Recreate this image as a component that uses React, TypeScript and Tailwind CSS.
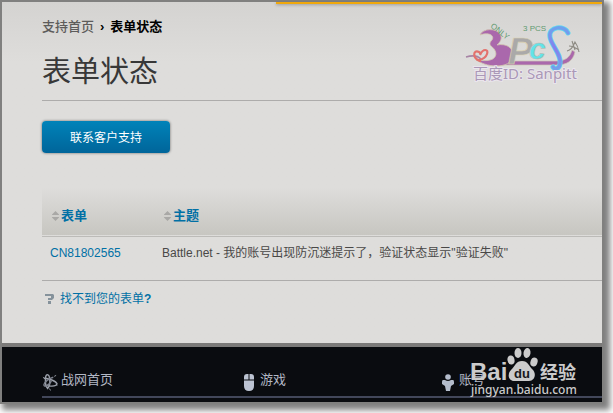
import type { ReactNode } from 'react';

const tickets = [
  {
    id: 'CN81802565',
    subject: 'Battle.net - 我的账号出现防沉迷提示了，验证状态显示"验证失败"',
  },
];

function SortArrows() {
  return (
    <svg aria-hidden width="7" height="10" viewBox="0 0 7 10" fill="#a9a8a6">
      <path d="M3.5 0 7 3.5V4H0v-.5zM0 6h7v.5L3.500 10 0 6.500z" />
    </svg>
  );
}

function SortHeader({ children }: { children: ReactNode }) {
  return (
    <button type="button" className="flex items-center gap-[2px] font-bold text-[#0070a5]">
      <SortArrows />
      {children}
    </button>
  );
}

function BattleNetIcon() {
  return (
    <svg aria-hidden width="17" height="18" viewBox="0 0 17 18" fill="none" stroke="#9ba0aa" strokeWidth="1.500">
      <path d="M4 3C5 0 8 1 8 5c1 4 0 9-2 11-2-1-3-7-2-13z" />
      <path d="M2 5c5 0 13 3 14 6-1 3-9 3-13 1" />
      <path d="M12 4C8 5 2 9 2 12s5 1 8-4" stroke="#7f848f" />
      <path d="M1 4l3 2M13 3l2-1M8 16l1 2M15 11l1 2" strokeWidth="1" />
    </svg>
  );
}

function MouseIcon() {
  return (
    <svg aria-hidden width="10" height="17" viewBox="0 0 10 17" fill="#bcc3d2">
      <path d="M4.500 0v5.500H0V3q0-3 3-3zM5.500 0H7q3 0 3 3v2.500H5.500zM0 6.500h10V12q0 5-5 5t-5-5z" />
    </svg>
  );
}

function PersonIcon() {
  return (
    <svg aria-hidden width="12" height="17" viewBox="0 0 12 17" fill="#b4bdcc">
      <circle cx="6" cy="3" r="2.800" />
      <path d="M1 6h2q3 2 6 0h2q1 0 1 2v2l-3 2-1 5H4l-1-5-3-2V8q0-2 1-2z" />
    </svg>
  );
}

function SanpittLogo() {
  return (
    <svg
      className="absolute top-4 right-[18px]"
      width="122"
      height="70"
      viewBox="0 0 122 70"
      role="img"
      aria-label="百度ID: Sanpitt"
    >
      <defs>
        <linearGradient id="ribbon" x1="0" y1="0" x2="0" y2="1">
          <stop offset="0" stopColor="#6fa2ee" />
          <stop offset=".5" stopColor="#8580ee" />
          <stop offset="1" stopColor="#74a0ea" />
        </linearGradient>
      </defs>
      {/* long tail ending in the arrow */}
      <path
        fill="#aa68ac"
        stroke="#cfc7b4"
        strokeWidth=".7"
        d="M36 43h58c10 0 14-4 16-11l3 2c-2 9-8 13-19 13H36z"
      />
      <path
        fill="#aa68ac"
        stroke="#d3c9b0"
        strokeWidth=".8"
        d="M18 17C21 10 34 10 38 16c3 5 0 8-3 11 9-2 17 3 16 11-1 7-8 10-17 10-8 0-15-3-20-6 8 1 15 1 18-2 4-4 1-9-3-12-2-2-1-4 1-6 3-5-4-8-12-5z"
      />
      <path d="M4 39q10-3 15 2" fill="none" stroke="#a784a5" strokeWidth="1.500" />
      <path
        d="M18 43C10 40 11 31 17 34c2 1 1 3 1 3 3-7 9-6 7-1-1 3-4 5-8 6"
        fill="none"
        stroke="#e3726d"
        strokeWidth="2.200"
        strokeLinecap="round"
      />
      <g fontFamily="'Liberation Sans', sans-serif" fontWeight="700" fontStyle="italic">
        <text x="46" y="46" fontSize="37" fill="#aaa9a9" stroke="#ddd3b2" strokeWidth=".6">P</text>
        <text x="67" y="41" fontSize="30" fill="#62e3e8" stroke="#bcb6ad" strokeWidth=".6">c</text>
      </g>
      {/* blue ribbon */}
      <g fill="none" strokeLinecap="round">
        <path d="M106 15C103 7 86 8 88 19c1 8 12 18 10 27-1 5-5 6-7 3" stroke="#5ed9ef" strokeWidth="5" />
        <path d="M106 15C103 7 86 8 88 19c1 8 12 18 10 27-1 5-5 6-7 3" stroke="url(#ribbon)" strokeWidth="3.500" />
      </g>
      <g fill="none" stroke="#8e8b83" strokeWidth="1.100">
        <path d="M105 33q5-1 8-9 3 4 4 10M107 28q4 0 10 4M110 23l3 9" />
      </g>
      <g fill="#5f9a70" fontFamily="'Liberation Sans', sans-serif" fontSize="8">
        <text transform="translate(28 9) rotate(38)">ONLY</text>
        <text x="61" y="13">3 PCS</text>
      </g>
      <text
        x="11"
        y="61"
        fontSize="15"
        fontFamily="'Noto Sans', 'Noto Sans CJK SC', sans-serif"
        fill="#aa98b7"
        stroke="#eae5ed"
        strokeWidth="2"
        paintOrder="stroke"
      >
        百度ID: Sanpitt
      </text>
    </svg>
  );
}

function BaiduLogo() {
  return (
    <svg
      className="pointer-events-none absolute right-[18px] bottom-0"
      width="120"
      height="59"
      viewBox="0 0 120 59"
      role="img"
      aria-label="Baidu 经验"
    >
      <g fill="#cbcbcb">
        <g fontFamily="'Liberation Sans', 'Noto Sans CJK SC', sans-serif" fontWeight="700">
          <text x="6" y="37" fontSize="24">Bai</text>
          <text x="76" y="36" fontSize="18">经验</text>
        </g>
        <ellipse cx="47" cy="17" rx="3.500" ry="4.500" transform="rotate(-12 47 17)" />
        <ellipse cx="54" cy="10" rx="3.500" ry="5" />
        <ellipse cx="63" cy="10" rx="3.500" ry="5" transform="rotate(8 63 10)" />
        <ellipse cx="70" cy="19" rx="3.500" ry="4.500" transform="rotate(20 70 19)" />
        <path d="M58 18c6 0 7 5 10 8 5 4 3 12-3 12H51c-7 0-8-7-4-11 4-4 5-9 11-9z" />
        <text x="7" y="51" fontSize="12" fontWeight="500" fontFamily="'Noto Sans', sans-serif">
          jingyan.baidu.com
        </text>
      </g>
      <text x="50" y="35" fontSize="13" fontWeight="700" fill="#17181b" fontFamily="'Liberation Sans', sans-serif">
        du
      </text>
    </svg>
  );
}

const footerLinks = [
  { label: '战网首页', icon: <BattleNetIcon /> },
  { label: '游戏', icon: <MouseIcon /> },
  { label: '账号', icon: <PersonIcon /> },
];

export default function App() {
  return (
    <div className="flex min-h-screen bg-white pr-[9px] pb-[9px] font-['Liberation_Sans','Noto_Sans_CJK_SC',sans-serif] text-xs text-[#494847]">
      <div className="relative flex min-w-0 flex-1 flex-col border-2 border-[#80807f] shadow-[4px_4px_6px_2px_rgba(0,0,0,0.5)]">
        <main className="relative flex-1 bg-[#dedddb] bg-linear-to-b from-[#d4d3d1] to-[#dedddb] to-[60px]">
          <div className="ml-[274px] h-[2px] bg-[#f0a80c] shadow-[0_1px_3px_rgba(0,0,0,0.3)]" />
          <SanpittLogo />
          <div className="pt-[13px] pl-10">
            <nav className="flex gap-[6px] text-[13px] leading-5 font-bold text-black">
              <a href="#support" className="font-medium text-[#5d5c5b]">支持首页</a>
              <span>›</span>
              <span>表单状态</span>
            </nav>
            <h1 className="mt-[15px] border-b border-[#adacab] pb-2 text-[29px] leading-10 font-normal text-[#383838]">
              表单状态
            </h1>
            <button
              type="button"
              className="mt-5 block h-8 w-32 rounded-sm bg-linear-to-b from-[#0083b9] to-[#00659a] pt-px text-white shadow-[0_0_2px_1px_rgba(0,0,0,0.25)]"
            >
              联系客户支持
            </button>

            <table className="mt-[35px] w-full border-collapse text-left">
              <thead>
                <tr className="h-12 border-b border-[#bcbbb8] bg-linear-to-b from-[#dedddb] to-[#c7c6c1] text-[13px]">
                  <th className="w-28 pt-2 pl-[10px]">
                    <SortHeader>表单</SortHeader>
                  </th>
                  <th className="pt-2 pl-[10px]">
                    <SortHeader>主题</SortHeader>
                  </th>
                </tr>
              </thead>
              <tbody>
                {tickets.map((ticket) => (
                  <tr key={ticket.id} className="h-11 border-b border-[#adacab]">
                    <td className="pb-[10px] pl-2">
                      <a href="#ticket" className="text-[#0070a5]">{ticket.id}</a>
                    </td>
                    <td className="pb-[10px] pl-2 whitespace-nowrap">{ticket.subject}</td>
                  </tr>
                ))}
              </tbody>
            </table>

            <a href="#help" className="mt-2 flex items-center gap-[6px] pl-[3px] leading-5 text-[#0070a5]">
              <svg aria-hidden width="9" height="10" viewBox="0 0 9 10" fill="#85929b">
                <path d="M0 0h8l1 1v3L7 6H3V4h3V2H0zM3 7h3v3H3z" />
              </svg>
              <span>
                找不到您的表单<b>?</b>
              </span>
            </a>
          </div>
        </main>

        <footer className="border-t-4 border-[#7b7a79] bg-[#0a0c10] pb-1 pl-10">
          <nav className="grid grid-cols-[199px_199px_auto] border-b-2 border-[#42475a] pt-[22px] pb-[5px] text-[13px] text-[#b3b8c5]">
            {footerLinks.map((link) => (
              <a key={link.label} href="#footer" className="flex h-[22px] items-center gap-[3px] leading-5">
                <span className="flex w-4 justify-center pt-1">{link.icon}</span>
                {link.label}
              </a>
            ))}
          </nav>
        </footer>
        <BaiduLogo />
      </div>
    </div>
  );
}
